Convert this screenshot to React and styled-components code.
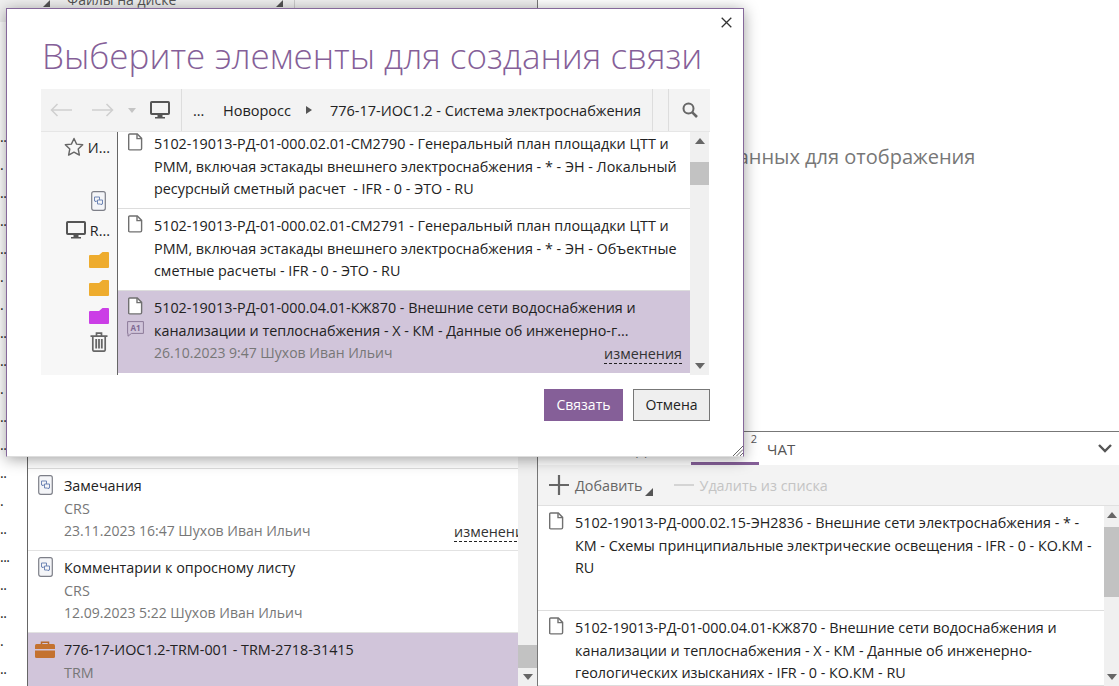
import styled, { createGlobalStyle } from 'styled-components';

const GlobalStyle = createGlobalStyle`
  html, body {
    margin: 0;
    padding: 0;
    background: #fff;
  }
  body {
    font-family: "Open Sans", "Noto Sans", "Liberation Sans", sans-serif;
    color: #222;
  }
`;

const FileIcon = ({ fill = '#fff' }) => (
  <svg width="15" height="18" viewBox="0 0 15 18" fill="none" stroke="#707070" strokeWidth="1.4">
    <path d="M1.7 1h7.6l4.3 4.4v10.2a1.3 1.3 0 0 1-1.3 1.3H1.700a1 1 0 0 1-1-1V2a1 1 0 0 1 1-1z" fill={fill} />
    <path d="M9 1v4.600h4.600" />
  </svg>
);

const ChatDocIcon = () => (
  <svg width="15" height="20" viewBox="0 0 15 20" fill="none">
    <rect x=".7" y=".7" width="13.6" height="18.6" rx="2" fill="#f4f5f8" stroke="#7d7f88" strokeWidth="1.2" />
    <path d="M3.500 6h5v4H5.500l-1 1v-1h-1z" stroke="#6f86b5" strokeWidth="1" />
    <path d="M6.500 9h5v4h-1v1l-1-1h-3z" fill="#f4f5f8" stroke="#6f86b5" strokeWidth="1" />
  </svg>
);

const MonitorIcon = () => (
  <svg width="20" height="18" viewBox="0 0 20 18" fill="none">
    <rect x="1" y="1" width="18" height="12" rx=".8" stroke="#555" strokeWidth="2" />
    <path d="M7.500 14h5v2h2.500v1.400H5V16h2.500z" fill="#555" />
  </svg>
);

const StarIcon = () => (
  <svg width="20" height="20" viewBox="0 0 20 20" fill="none" stroke="#666" strokeWidth="1.4" strokeLinejoin="round">
    <path d="M10 1.500l2.600 5.600 6.100.7-4.500 4.200 1.200 6.100-5.400-3-5.400 3 1.200-6.100L1.300 7.800l6.100-.7z" />
  </svg>
);

const FolderIcon = ({ color }) => (
  <svg width="20" height="17" viewBox="0 0 20 17">
    <path d="M0 5q0-1 1-1h9l3.500-3H19q1 0 1 1v14q0 1-1 1H1q-1 0-1-1z" fill={color} />
  </svg>
);

const TrashIcon = () => (
  <svg width="18" height="20" viewBox="0 0 18 20" fill="none" stroke="#666" strokeWidth="1.7">
    <path d="M.5 4.200h17M6.500 4V1.200h5V4" />
    <path d="M2.800 4.500v13.200q0 1.500 1.500 1.500h9.400q1.500 0 1.500-1.500V4.500" />
    <path d="M6.200 7v9.500M9 7v9.500M11.800 7v9.500" strokeWidth="1.800" />
  </svg>
);

const SearchIcon = () => (
  <svg width="16" height="16" viewBox="0 0 16 16" fill="none" stroke="#666" strokeWidth="2">
    <circle cx="6.500" cy="6.500" r="5" />
    <path d="M10.300 10.300l4.700 4.700" strokeWidth="2.600" />
  </svg>
);

const ArrowIcon = ({ flip }) => (
  <svg width="22" height="14" viewBox="0 0 22 14" fill="none" stroke="#cfcfcf" strokeWidth="1.500" style={flip ? { transform: 'scaleX(-1)' } : undefined}>
    <path d="M22 7H1.500M7.500 1L1.500 7l6 6" />
  </svg>
);

const CommentIcon = () => (
  <svg width="17" height="16" viewBox="0 0 17 16" fill="none">
    <path d="M.6.6h15.800v11.800H4.500L1 15.200V12.400H.6z" stroke="#8c7a99" strokeWidth="1" />
    <text x="3.500" y="9.500" fontSize="8" fontWeight="700" fill="#7f6a94" fontFamily="Open Sans, sans-serif">A1</text>
  </svg>
);

const BagIcon = () => (
  <svg width="20" height="17" viewBox="0 0 20 17">
    <path d="M6.500 3V1.200h7V3" fill="none" stroke="#b8692a" strokeWidth="1.500" />
    <path d="M1.500 3h17q1.500 0 1.500 1.500V8H0V4.500Q0 3 1.500 3z" fill="#c4722f" />
    <path d="M0 9.500h20v6q0 1.500-1.500 1.500h-17Q0 17 0 15.500z" fill="#c4722f" />
  </svg>
);

const CloseIcon = () => (
  <svg width="11" height="11" viewBox="0 0 11 11" stroke="#333" strokeWidth="1.300">
    <path d="M.7.700l9.600 9.600M10.300.7L.7 10.300" />
  </svg>
);

const PlusIcon = () => (
  <svg width="20" height="20" viewBox="0 0 20 20" stroke="#666" strokeWidth="2.200">
    <path d="M10 0v20M0 10h20" />
  </svg>
);

const ChevronIcon = () => (
  <svg width="14" height="9" viewBox="0 0 14 9" fill="none" stroke="#555" strokeWidth="2.400">
    <path d="M1 1l6 6 6-6" />
  </svg>
);

const dialogItems = [
  {
    lines: [
      '5102-19013-РД-01-000.02.01-СМ2790 - Генеральный план площадки ЦТТ и',
      'РММ, включая эстакады внешнего электроснабжения - * - ЭН - Локальный',
      'ресурсный сметный расчет  - IFR - 0 - ЭТО - RU',
    ],
  },
  {
    lines: [
      '5102-19013-РД-01-000.02.01-СМ2791 - Генеральный план площадки ЦТТ и',
      'РММ, включая эстакады внешнего электроснабжения - * - ЭН - Объектные',
      'сметные расчеты - IFR - 0 - ЭТО - RU',
    ],
  },
  {
    selected: true,
    lines: [
      '5102-19013-РД-01-000.04.01-КЖ870 - Внешние сети водоснабжения и',
      'канализации и теплоснабжения - Х - КМ - Данные об инженерно-г...',
    ],
    date: '26.10.2023 9:47 Шухов Иван Ильич',
  },
];

const navDots = ['...', '.', '..', '..', '..', '.', '.', '..', '...', '.', '..', '...', '..', '.', '..', '...', '..', '..', '.', '..'];

export default function App() {
  return (
    <Page>
      <GlobalStyle />

      <LeftPane>
        <TopTabs>
          <TopTab>
            <TabMark />
            <TabLabel>Файлы на диске</TabLabel>
            <TabMark $end />
          </TopTab>
        </TopTabs>
        <LeftBody>
          <NavStrip>
            {navDots.map((dots, i) => (
              <NavDots key={i}>{dots}</NavDots>
            ))}
          </NavStrip>
          <ListPanel>
            <ListColumn>
              <ListHead />
              <DocRow>
                <RowIcon><ChatDocIcon /></RowIcon>
                <RowText>
                  <Line>Замечания</Line>
                  <Line $muted>CRS</Line>
                  <BackMeta>
                    <DateLine>23.11.2023 16:47 Шухов Иван Ильич</DateLine>
                    <ChangesLink>изменения</ChangesLink>
                  </BackMeta>
                </RowText>
              </DocRow>
              <DocRow>
                <RowIcon><ChatDocIcon /></RowIcon>
                <RowText>
                  <Line>Комментарии к опросному листу</Line>
                  <Line $muted>CRS</Line>
                  <DateLine>12.09.2023 5:22 Шухов Иван Ильич</DateLine>
                </RowText>
              </DocRow>
              <DocRow $selected>
                <BagSlot><BagIcon /></BagSlot>
                <RowText>
                  <Line>776-17-ИОС1.2-TRM-001 - TRM-2718-31415</Line>
                  <Line $muted>TRM</Line>
                </RowText>
              </DocRow>
            </ListColumn>
            <BackScroll>
              <Thumb $height={23} />
              <ScrollArrow $down />
            </BackScroll>
          </ListPanel>
        </LeftBody>
      </LeftPane>

      <RightPane>
        <EmptyArea>Нет данных для отображения</EmptyArea>
        <TabBar>
          <TabSlot>ЗАДАЧИ</TabSlot>
          <ActiveTab>
            СВЯЗИ
            <TabCount>2</TabCount>
          </ActiveTab>
          <ChatTab>ЧАТ</ChatTab>
          <ChevronSlot><ChevronIcon /></ChevronSlot>
        </TabBar>
        <ActionBar>
          <PlusIcon />
          <ActionLabel>Добавить</ActionLabel>
          <CornerMark />
          <MinusMark />
          <ActionLabel $disabled>Удалить из списка</ActionLabel>
        </ActionBar>
        <LinkedArea>
          <LinkedList>
            <LinkedItem $height={105}>
              <FileIcon />
              <RowText>
                <Line>5102-19013-РД-000.02.15-ЭН2836 - Внешние сети электроснабжения - * -</Line>
                <Line>КМ - Схемы принципиальные электрические освещения - IFR - 0 - КО.КМ -</Line>
                <Line>RU</Line>
              </RowText>
            </LinkedItem>
            <LinkedItem>
              <FileIcon />
              <RowText>
                <Line>5102-19013-РД-01-000.04.01-КЖ870 - Внешние сети водоснабжения и</Line>
                <Line>канализации и теплоснабжения - Х - КМ - Данные об инженерно-</Line>
                <Line>геологических изысканиях - IFR - 0 - КО.КМ - RU</Line>
              </RowText>
            </LinkedItem>
          </LinkedList>
          <LinkedScroll>
            <ScrollArrow />
            <Thumb $height={70} />
            <ScrollArrow $down />
          </LinkedScroll>
        </LinkedArea>
      </RightPane>

      <Dialog>
        <CloseButton><CloseIcon /></CloseButton>
        <Title>Выберите элементы для создания связи</Title>
        <Explorer>
          <ExplorerBar>
            <BarNav>
              <ArrowIcon />
              <ArrowIcon flip />
              <DropMark />
              <MonitorIcon />
            </BarNav>
            <Crumbs>
              <Crumb $width={30}>...</Crumb>
              <Crumb>Новоросс</Crumb>
              <CrumbArrow />
              <Crumb>776-17-ИОС1.2 - Система электроснабжения</Crumb>
            </Crumbs>
            <BarGap />
            <SearchSlot><SearchIcon /></SearchSlot>
          </ExplorerBar>
          <ExplorerBody>
            <Tree>
              <TreeRow $height={28}>
                <StarIcon />
                <TreeLabel>И...</TreeLabel>
              </TreeRow>
              <TreeRow $height={24} $top={28} $right={11}>
                <ChatDocIcon />
              </TreeRow>
              <TreeRow $height={24} $top={5}>
                <MonitorIcon />
                <TreeLabel>R...</TreeLabel>
              </TreeRow>
              <TreeRow $height={28} $top={3} $right={8}><FolderIcon color="#eeac2e" /></TreeRow>
              <TreeRow $height={28} $right={8}><FolderIcon color="#eeac2e" /></TreeRow>
              <TreeRow $height={28} $right={8}><FolderIcon color="#cb3ee6" /></TreeRow>
              <TreeRow $height={26} $right={9}><TrashIcon /></TreeRow>
            </Tree>
            <FileList>
              <FileListInner>
                {dialogItems.map((item) => (
                  <FileItem key={item.lines[0]} $selected={item.selected}>
                    <ItemIcons>
                      <FileIcon />
                      {item.selected && <CommentIcon />}
                    </ItemIcons>
                    <RowText>
                      {item.lines.map((line) => (
                        <Line key={line}>{line}</Line>
                      ))}
                      {item.date && (
                        <ItemMeta>
                          <DateLine>{item.date}</DateLine>
                          <ChangesLink>изменения</ChangesLink>
                        </ItemMeta>
                      )}
                    </RowText>
                  </FileItem>
                ))}
              </FileListInner>
            </FileList>
            <DialogScroll>
              <ScrollArrow />
              <Thumb $height={23} />
              <ScrollArrow $down />
            </DialogScroll>
          </ExplorerBody>
        </Explorer>
        <Footer>
          <PrimaryButton>Связать</PrimaryButton>
          <CancelButton>Отмена</CancelButton>
        </Footer>
        <Grip>
          <svg width="11" height="11" viewBox="0 0 11 11" stroke="#666" strokeWidth="1">
            <path d="M11 1L1 11M11 4.500L4.500 11M11 8l-3 3" />
          </svg>
        </Grip>
      </Dialog>
    </Page>
  );
}

const Page = styled.div`
  position: relative;
  display: flex;
  width: 1119px;
  height: 686px;
  overflow: hidden;
  font-size: 14.35px;
  background: #fff;
`;

const LeftPane = styled.div`
  display: flex;
  flex-direction: column;
  width: 537px;
  flex: none;
  border-right: 1px solid #777;
  box-sizing: content-box;
`;

const TopTabs = styled.div`
  display: flex;
  height: 22px;
  flex: none;
  background: #f0f0f0;
`;

const TopTab = styled.div`
  display: flex;
  width: 295px;
  padding: 0 11px 0 43px;
  box-sizing: border-box;
  border-right: 1px solid #ccc;
  overflow: hidden;
`;

const TabMark = styled.span`
  align-self: flex-start;
  margin: 0 0 0 ${({ $end }) => ($end ? 'auto' : '0')};
  border-left: 7px solid transparent;
  border-bottom: 7px solid #555;
`;

const TabLabel = styled.div`
  margin: -9px 0 0 17px;
  line-height: 18px;
  font-size: 14px;
  white-space: nowrap;
  color: #555;
`;

const LeftBody = styled.div`
  display: flex;
  flex: 1;
  min-height: 0;
`;

const NavStrip = styled.div`
  width: 27px;
  flex: none;
  padding-top: 101px;
  border-right: 1px solid #666;
  overflow: hidden;
  box-sizing: content-box;
`;

const NavDots = styled.div`
  height: 28px;
  line-height: 28px;
  font-size: 14px;
  letter-spacing: -0.5px;
  color: #222;
`;

const ListPanel = styled.div`
  display: flex;
  flex: 1;
  min-width: 0;
  background: #f3f3f3;
`;

const ListColumn = styled.div`
  width: 490px;
  flex: none;
  overflow: hidden;
  background: #fff;
`;

const ListHead = styled.div`
  height: 446px;
  border-bottom: 1px solid #ddd;
  box-sizing: content-box;
`;

const DocRow = styled.div`
  display: flex;
  height: 82px;
  box-sizing: border-box;
  padding: 6px 0 0 10px;
  gap: 11px;
  border-bottom: 1px solid #e2e2e2;
  background: ${({ $selected }) => ($selected ? '#d1c5da' : '#fff')};
`;

const RowIcon = styled.div`
  width: 15px;
  flex: none;
`;

const BagSlot = styled.div`
  width: 20px;
  flex: none;
  margin: 2px -2px 0 -3px;
`;

const RowText = styled.div`
  flex: 1;
  min-width: 0;
`;

const Line = styled.div`
  line-height: 22.5px;
  white-space: pre;
  color: ${({ $muted }) => ($muted ? '#777' : '#222')};
`;

const DateLine = styled(Line)`
  font-size: 14px;
  color: #777;
`;

const BackMeta = styled.div`
  display: flex;
  justify-content: space-between;
  width: 468px;
`;

const ChangesLink = styled.span`
  line-height: 18px;
  margin-top: 3px;
  height: 18px;
  color: #333;
  border-bottom: 1px dashed #222;
`;

const ScrollColumn = styled.div`
  display: flex;
  flex-direction: column;
  align-items: stretch;
  background: #f0f0f0;
  flex: none;
`;

const BackScroll = styled(ScrollColumn)`
  flex: 1;
  justify-content: flex-end;
`;

const Thumb = styled.div`
  height: ${({ $height }) => $height}px;
  background: #c2c2c2;
  flex: none;
`;

const ScrollArrow = styled.div`
  height: 18px;
  flex: none;
  display: flex;
  align-items: center;
  justify-content: center;
  &::before {
    content: '';
    border-left: 5px solid transparent;
    border-right: 5px solid transparent;
    ${({ $down }) => ($down ? 'border-top: 6px solid #666;' : 'border-bottom: 6px solid #666;')}
  }
`;

const RightPane = styled.div`
  display: flex;
  flex-direction: column;
  flex: 1;
  min-width: 0;
`;

const EmptyArea = styled.div`
  height: 432px;
  flex: none;
  box-sizing: border-box;
  padding: 143px 0 0 4px;
  text-align: center;
  font-size: 20px;
  line-height: 28px;
  color: #777;
  border-bottom: 1px solid #777;
`;

const TabBar = styled.div`
  display: flex;
  height: 33px;
  flex: none;
  font-size: 15px;
  color: #555;
`;

const TabSlot = styled.div`
  width: 153px;
  flex: none;
  padding: 7px 0 0 80px;
  box-sizing: border-box;
`;

const ActiveTab = styled.div`
  position: relative;
  width: 68px;
  flex: none;
  padding-top: 7px;
  box-sizing: border-box;
  border-bottom: 3px solid #855f98;
`;

const TabCount = styled.span`
  position: absolute;
  right: 2px;
  top: -1px;
  font-size: 11px;
  color: #555;
`;

const ChatTab = styled.div`
  margin-left: 8px;
  padding-top: 7px;
`;

const ChevronSlot = styled.div`
  margin: 12px 7px 0 auto;
  line-height: 0;
`;

const ActionBar = styled.div`
  display: flex;
  align-items: center;
  height: 41px;
  flex: none;
  box-sizing: border-box;
  padding: 0 0 0 11px;
  background: #f3f3f3;
  border-bottom: 1px solid #e0e0e0;
`;

const ActionLabel = styled.span`
  margin-left: 6px;
  color: ${({ $disabled }) => ($disabled ? '#c4c4c4' : '#666')};
`;

const CornerMark = styled.span`
  align-self: flex-end;
  margin: 0 0 9px 2px;
  border-left: 8px solid transparent;
  border-bottom: 8px solid #555;
`;

const MinusMark = styled.span`
  width: 20px;
  height: 2px;
  margin-left: 21px;
  background: #d4d4d4;
`;

const LinkedArea = styled.div`
  display: flex;
  flex: 1;
  min-height: 0;
  overflow: hidden;
`;

const LinkedList = styled.div`
  flex: 1;
  min-width: 0;
`;

const LinkedItem = styled.div`
  display: flex;
  gap: 11px;
  height: ${({ $height }) => ($height ? `${$height}px` : 'auto')};
  box-sizing: border-box;
  padding: 6px 0 0 11px;
  border-bottom: 1px solid #ddd;
`;

const LinkedScroll = styled(ScrollColumn)`
  width: 15px;
  & > div:nth-child(2) {
    margin-top: 3px;
  }
  & > div:last-child {
    margin-top: auto;
  }
`;

const Dialog = styled.div`
  position: absolute;
  left: 6px;
  top: 8px;
  width: 738px;
  height: 449px;
  box-sizing: border-box;
  display: flex;
  flex-direction: column;
  padding: 0 33px 0 35px;
  background: #fff;
  border: 1px solid #85689a;
  border-bottom-color: #ddd;
  box-shadow: 0 2px 14px rgba(0, 0, 0, 0.38);
`;

const CloseButton = styled.div`
  position: absolute;
  right: 11px;
  top: 8px;
  line-height: 0;
`;

const Title = styled.h1`
  margin: 0;
  height: 80px;
  flex: none;
  padding-top: 23px;
  box-sizing: border-box;
  font-size: 35px;
  line-height: 48px;
  font-weight: 300;
  white-space: nowrap;
  color: #855f98;
`;

const Explorer = styled.div`
  display: flex;
  flex-direction: column;
  height: 286px;
  flex: none;
  margin-left: -1px;
`;

const ExplorerBar = styled.div`
  display: flex;
  align-items: center;
  height: 43px;
  flex: none;
  background: #f3f3f3;
  border-bottom: 1px solid #e6e6e6;
  box-sizing: border-box;
`;

const BarNav = styled.div`
  display: flex;
  align-items: center;
  width: 141px;
  height: 100%;
  flex: none;
  box-sizing: border-box;
  padding-left: 9px;
  border-right: 1px solid #ddd;
  & > svg:nth-child(2) {
    margin-left: 20px;
  }
  & > svg:last-child {
    margin-left: 14px;
  }
`;

const DropMark = styled.span`
  margin-left: 14px;
  border-left: 4px solid transparent;
  border-right: 4px solid transparent;
  border-top: 5px solid #c4c4c4;
`;

const Crumbs = styled.div`
  display: flex;
  align-items: center;
  flex: 1;
  min-width: 0;
  padding-left: 11px;
  font-size: 14.5px;
  white-space: nowrap;
`;

const Crumb = styled.span`
  ${({ $width }) => ($width ? `width: ${$width}px;` : '')}
  color: #222;
`;

const CrumbArrow = styled.span`
  margin: 0 18px 0 15px;
  border-top: 4px solid transparent;
  border-bottom: 4px solid transparent;
  border-left: 6px solid #555;
`;

const BarGap = styled.div`
  width: 15px;
  height: 100%;
  flex: none;
  border-left: 1px solid #ddd;
  border-right: 1px solid #ddd;
`;

const SearchSlot = styled.div`
  width: 41px;
  flex: none;
  display: flex;
  justify-content: center;
`;

const ExplorerBody = styled.div`
  display: flex;
  flex: 1;
  min-height: 0;
`;

const Tree = styled.div`
  width: 76px;
  flex: none;
  background: #f7f7f7;
  border-right: 1px solid #666;
  padding-top: 1px;
  box-sizing: content-box;
  overflow: hidden;
`;

const TreeRow = styled.div`
  display: flex;
  align-items: center;
  justify-content: flex-end;
  gap: 4px;
  height: ${({ $height }) => $height}px;
  margin-top: ${({ $top }) => $top || 0}px;
  padding-right: ${({ $right }) => $right || 7}px;
`;

const TreeLabel = styled.span`
  color: #222;
`;

const FileList = styled.div`
  flex: 1;
  min-width: 0;
  overflow: hidden;
`;

const FileListInner = styled.div`
  margin-top: -5px;
`;

const FileItem = styled.div`
  display: flex;
  gap: 11px;
  height: 82px;
  box-sizing: border-box;
  padding: 6px 8px 0 10px;
  border-bottom: 1px solid #ddd;
  background: ${({ $selected }) => ($selected ? '#d1c5da' : '#fff')};
  ${({ $selected }) => ($selected ? 'border-bottom-color: #d1c5da;' : '')}
`;

const ItemIcons = styled.div`
  display: flex;
  flex-direction: column;
  gap: 6px;
  width: 16px;
  flex: none;
  margin-left: -1px;
  & > svg:first-child {
    margin-left: 1px;
  }
`;

const ItemMeta = styled.div`
  display: flex;
  justify-content: space-between;
`;

const DialogScroll = styled(ScrollColumn)`
  width: 19px;
  margin-right: 1px;
  & > div:nth-child(2) {
    margin-top: 12px;
  }
  & > div:last-child {
    margin-top: auto;
  }
`;

const Footer = styled.div`
  display: flex;
  justify-content: flex-end;
  gap: 10px;
  margin-top: 14px;
`;

const PrimaryButton = styled.div`
  width: 79px;
  height: 32px;
  line-height: 32px;
  text-align: center;
  font-size: 14px;
  color: #fff;
  background: #855f98;
`;

const CancelButton = styled.div`
  width: 77px;
  height: 32px;
  line-height: 30px;
  box-sizing: border-box;
  text-align: center;
  font-size: 14px;
  color: #222;
  background: #efefef;
  border: 1px solid #777;
`;

const Grip = styled.div`
  position: absolute;
  right: 0;
  bottom: 0;
  line-height: 0;
`;
